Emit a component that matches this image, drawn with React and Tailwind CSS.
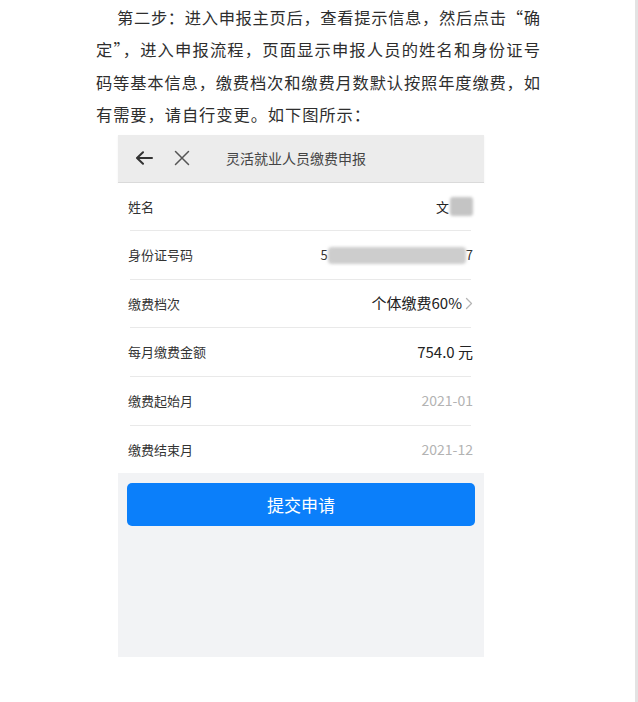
import React from 'react'

const cjk = { fontFamily: '"Noto Sans CJK SC", "Noto Sans", sans-serif' }

const paragraph = [
  '第二步：进入申报主页后，查看提示信息，然后点击“确',
  '定”，进入申报流程，页面显示申报人员的姓名和身份证号',
  '码等基本信息，缴费档次和缴费月数默认按照年度缴费，如',
  '有需要，请自行变更。如下图所示：',
]

function BackIcon() {
  return (
    <svg width="18" height="14" viewBox="0 0 18 14" fill="none">
      <path d="M17 7H2.5M8 1.2L2 7l6 5.8" stroke="#333" strokeWidth="2" strokeLinecap="round" strokeLinejoin="round" />
    </svg>
  )
}

function CloseIcon() {
  return (
    <svg width="16" height="16" viewBox="0 0 16 16" fill="none">
      <path d="M1.5 1.5l13 13M14.5 1.5l-13 13" stroke="#555" strokeWidth="1.5" strokeLinecap="round" />
    </svg>
  )
}

function Chevron() {
  return (
    <svg width="8" height="13" viewBox="0 0 8 13" fill="none" className="ml-[3px]">
      <path d="M1.5 1.5l5 5-5 5" stroke="#b5b5b5" strokeWidth="1.3" strokeLinecap="round" strokeLinejoin="round" />
    </svg>
  )
}

function Row({ label, children, last }) {
  return (
    <div className={last ? 'h-[47.6px] flex items-center' : 'h-[48.6px] flex flex-col'}>
      <div className="h-[47.6px] w-full flex items-center justify-between pl-[10px] pr-[11px]">
        <span className="text-[13px] text-[#333]">{label}</span>
        <div className="flex items-center">{children}</div>
      </div>
      {!last && <div className="h-px bg-[#e9e9e9] ml-[12px] mr-[13px]" />}
    </div>
  )
}

export default function App() {
  return (
    <div className="relative w-[638px] h-[702px] bg-white overflow-hidden" style={cjk}>
      {/* page scroll edge */}
      <div className="absolute right-0 top-0 w-[3px] h-full bg-[#e3e3e3]" />

      <div className="pl-[96px] w-[540px] pt-[1px] text-[16.3px] leading-[32.4px] text-[#2e2e2e]">
        {paragraph.map((line, i) => (
          <div
            key={i}
            className={
              i === 0
                ? 'pl-[21px] text-justify [text-align-last:justify]'
                : i < paragraph.length - 1
                  ? 'text-justify [text-align-last:justify]'
                  : 'tracking-[0.9px]'
            }
          >
            {line}
          </div>
        ))}
      </div>

      <div className="ml-[118px] mt-[4px] w-[366px] h-[522px] bg-[#f2f3f5] flex flex-col">
        <div className="h-[48px] bg-[#ececec] border-b border-[#dadada] shadow-[0_1px_2px_rgba(0,0,0,0.06)] flex items-center pl-[17px]">
          <BackIcon />
          <span className="ml-[21px]"><CloseIcon /></span>
          <span className="ml-[36px] text-[14px] text-[#444]">灵活就业人员缴费申报</span>
        </div>

        <div className="bg-white">
          <Row label="姓名">
            <span className="text-[13px] text-[#222]">文</span>
            <span className="ml-[1px] w-[23px] h-[19px] bg-[#c4c4c4] rounded-[3px] blur-[1.5px]" />
          </Row>
          <Row label="身份证号码">
            <span className="text-[13px] text-[#333]">5</span>
            <span className="w-[138px] h-[17px] bg-[#cdcdcd] rounded-[4px] blur-[1.5px]" />
            <span className="text-[13px] text-[#333]">7</span>
          </Row>
          <Row label="缴费档次">
            <span className="text-[15px] text-[#222]">个体缴费60%</span>
            <Chevron />
          </Row>
          <Row label="每月缴费金额">
            <span className="text-[15px] text-[#222]">754.0 元</span>
          </Row>
          <Row label="缴费起始月">
            <span className="text-[14px] text-[#b3b3b3]">2021-01</span>
          </Row>
          <Row label="缴费结束月" last>
            <span className="text-[14px] text-[#b3b3b3]">2021-12</span>
          </Row>
        </div>

        <div className="px-[9px] pt-[10px]">
          <button className="w-full h-[43px] rounded-[5px] bg-[#0b7ffa] text-white text-[17px] flex items-center justify-center">
            提交申请
          </button>
        </div>
      </div>
    </div>
  )
}
